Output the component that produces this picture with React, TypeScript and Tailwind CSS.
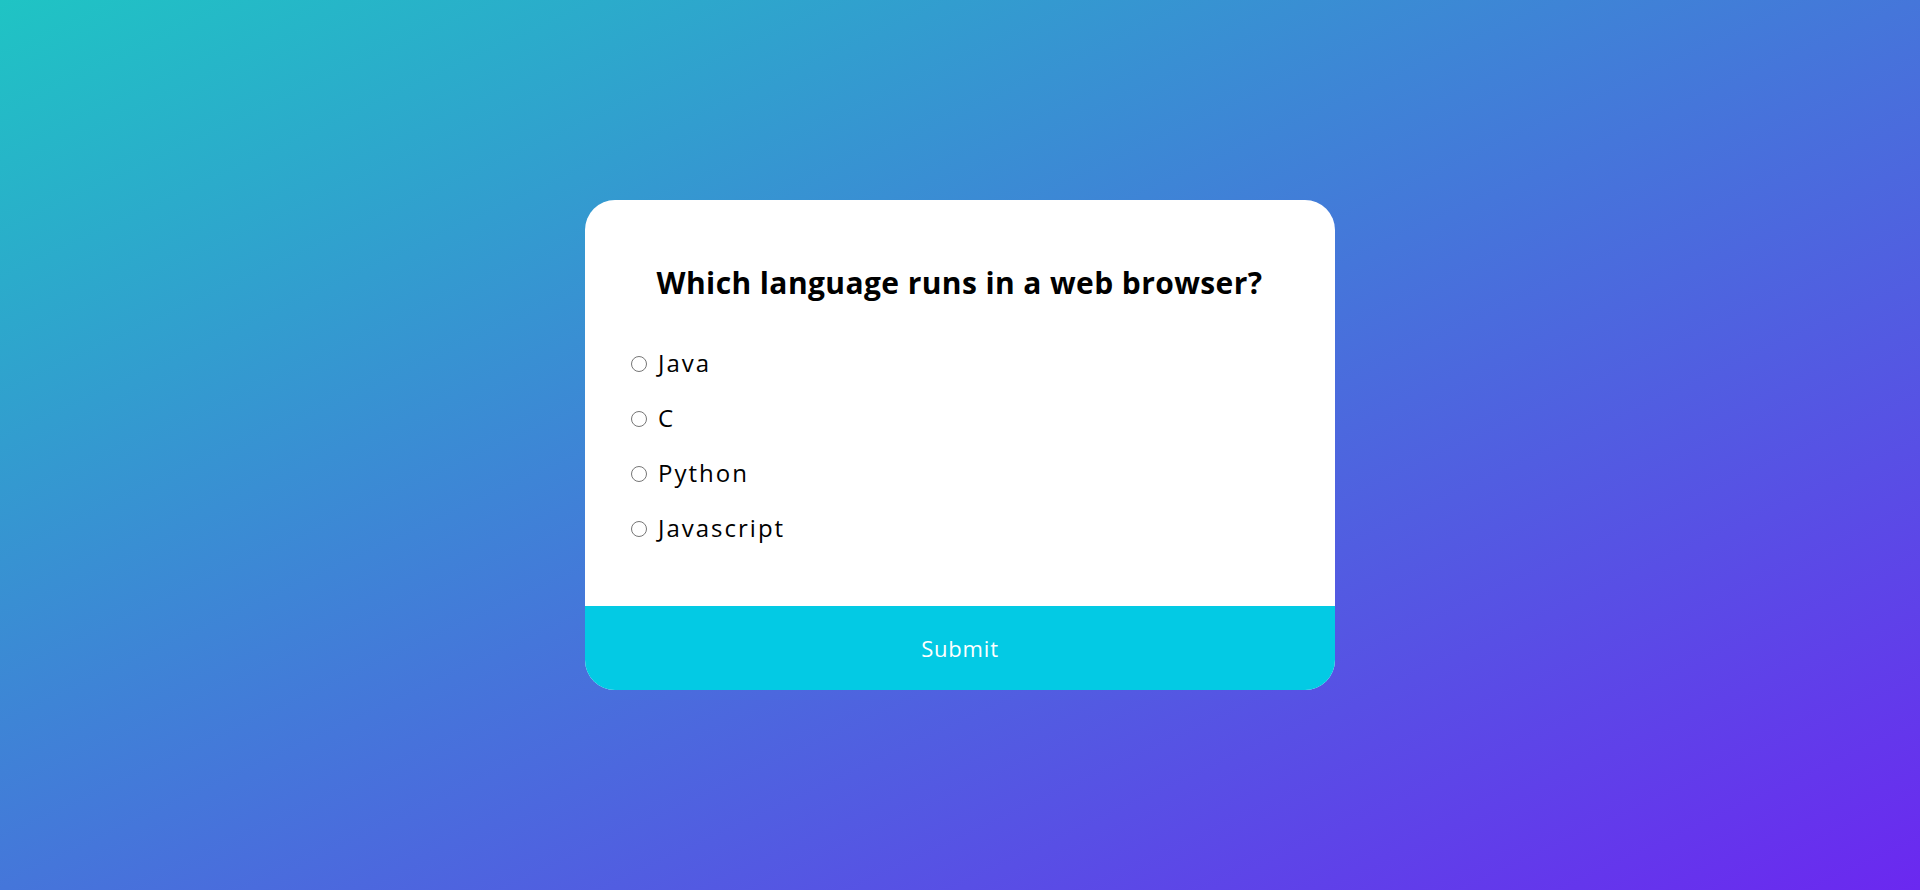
import React from "react";

const options = ["Java", "C", "Python", "Javascript"];

export default function App() {
  return (
    <div
      className="w-full h-[890px] flex items-center justify-center bg-[linear-gradient(to_bottom_right,#1fc4c4,#6b28f0)]"
      style={{ fontFamily: '"Open Sans", "Noto Sans", sans-serif' }}
    >
      <div className="w-[750px] rounded-[30px] overflow-hidden bg-white">
        <div className="pt-[60px] pb-[51px] pl-[46px] pr-[47px]">
          <h2 className="text-[30px] leading-[45px] font-bold tracking-[0.4px] text-center text-black m-0">
            Which language runs in a web browser?
          </h2>
          <ul className="mt-[30px] list-none p-0 m-0">
            {options.map((o) => (
              <li key={o} className="h-[55px] flex items-center">
                <input
                  type="radio"
                  name="answer"
                  id={o}
                  className="m-0 w-[16px] h-[16px] translate-y-[1px]"
                />
                <label htmlFor={o} className="ml-[11px] text-[24px] tracking-[2px] text-black">
                  {o}
                </label>
              </li>
            ))}
          </ul>
        </div>
        <button className="w-full h-[84px] bg-[#03cae4] text-white text-[22px] tracking-[0.8px] border-0 cursor-pointer">
          Submit
        </button>
      </div>
    </div>
  );
}
